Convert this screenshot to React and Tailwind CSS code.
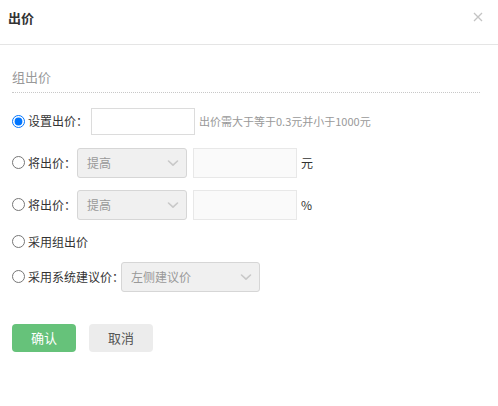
import React from "react";

const Chevron = () => (
  <svg width="14" height="14" viewBox="0 0 14 14" fill="none" className="shrink-0">
    <path d="M2.5 5 L7 9.2 L11.5 5" stroke="#c8c8c8" strokeWidth="1.6" strokeLinecap="round" strokeLinejoin="round" />
  </svg>
);

const Select = ({ text, w }) => (
  <div className={`flex h-[30px] items-center justify-between rounded-[3px] border border-[#d6d6d6] bg-[#f0f0f0] pl-[9px] pr-[6px] ${w}`}>
    <span className="text-[12px] text-[#999]">{text}</span>
    <Chevron />
  </div>
);

const Radio = ({ checked }) => (
  <input type="radio" name="bid" defaultChecked={checked} className="m-0 h-[13px] w-[13px] shrink-0" />
);

export default function App() {
  return (
    <div className="h-[406px] w-[498px] bg-white text-[#333]" style={{ fontFamily: '"Noto Sans CJK SC", "Noto Sans", sans-serif' }}>
      <div className="flex h-[45px] items-start justify-between border-b border-[#e5e5e5] pl-[8px] pr-[15px] pt-[8px]">
        <span className="text-[13px] font-bold leading-[20px] text-[#333]">出价</span>
        <svg width="10" height="10" viewBox="0 0 10 10" className="mt-[4px]">
          <path d="M1 1 L9 9 M9 1 L1 9" stroke="#c4c4c4" strokeWidth="1.3" />
        </svg>
      </div>
      <div className="px-[12px]">
        <div className="mt-[22px] w-[468px] border-b border-dotted border-[#c8c8c8] pb-[5px] text-[13px] text-[#999]">组出价</div>

        <div className="mt-[15px] flex h-[27px] items-center whitespace-nowrap">
          <Radio checked />
          <span className="ml-[3px] w-[63px] text-[12px]">设置出价：</span>
          <div className="h-[27px] w-[104px] border border-[#dcdcdc] bg-white" />
          <span className="ml-[4px] text-[11px] text-[#999]">出价需大于等于0.3元并小于1000元</span>
        </div>

        <div className="mt-[13px] flex h-[30px] items-center whitespace-nowrap">
          <Radio />
          <span className="ml-[3px] w-[49px] text-[12px]">将出价：</span>
          <Select text="提高" w="w-[110px]" />
          <div className="ml-[6px] h-[30px] w-[104px] border border-[#e8e8e8] bg-[#fafafa]" />
          <span className="ml-[4px] text-[12px]">元</span>
        </div>

        <div className="mt-[12px] flex h-[30px] items-center whitespace-nowrap">
          <Radio />
          <span className="ml-[3px] w-[49px] text-[12px]">将出价：</span>
          <Select text="提高" w="w-[110px]" />
          <div className="ml-[6px] h-[30px] w-[104px] border border-[#e8e8e8] bg-[#fafafa]" />
          <span className="ml-[4px] text-[12px]">%</span>
        </div>

        <div className="mt-[13px] flex h-[18px] items-center whitespace-nowrap">
          <Radio />
          <span className="ml-[3px] text-[12px]">采用组出价</span>
        </div>

        <div className="mt-[11px] flex h-[30px] items-center whitespace-nowrap">
          <Radio />
          <span className="ml-[3px] w-[93px] text-[12px]">采用系统建议价：</span>
          <Select text="左侧建议价" w="w-[139px]" />
        </div>

        <div className="mt-[32px] flex gap-[13px]">
          <button className="h-[28px] w-[64px] rounded-[4px] bg-[#66c27a] text-[13px] text-white">确认</button>
          <button className="h-[28px] w-[64px] rounded-[4px] bg-[#ececec] text-[13px] text-[#555]">取消</button>
        </div>
      </div>
    </div>
  );
}
